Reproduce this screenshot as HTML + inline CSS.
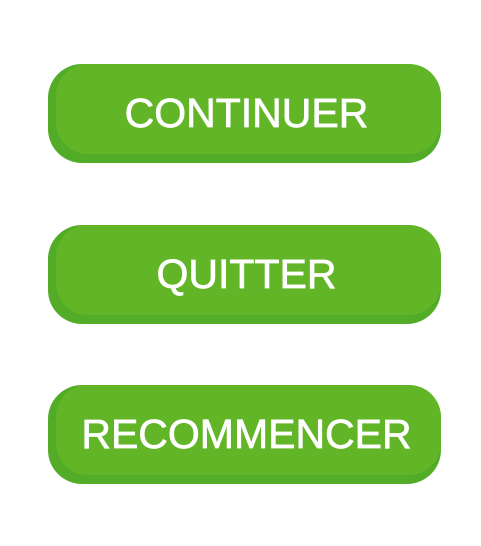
<!DOCTYPE html>
<html><head><style>
body{margin:0;width:481px;height:546px;background:#fff;position:relative;overflow:hidden}
.b{position:absolute;left:48px;width:393px;height:99px;border-radius:34px;background:#52ac28}
.t{position:absolute;left:8px;right:0;top:0;bottom:9px;border-radius:32px;background:#62b526;display:flex;align-items:center;justify-content:center;color:#fff;font-family:"Liberation Sans",sans-serif;font-size:41px;-webkit-text-stroke:0.7px #fff}
.t span{margin-left:-4px;position:relative;top:4px}
</style></head><body>
<div class="b" style="top:64px"><div class="t"><span>CONTINUER</span></div></div>
<div class="b" style="top:225px"><div class="t"><span>QUITTER</span></div></div>
<div class="b" style="top:385px"><div class="t"><span>RECOMMENCER</span></div></div>
</body></html>
